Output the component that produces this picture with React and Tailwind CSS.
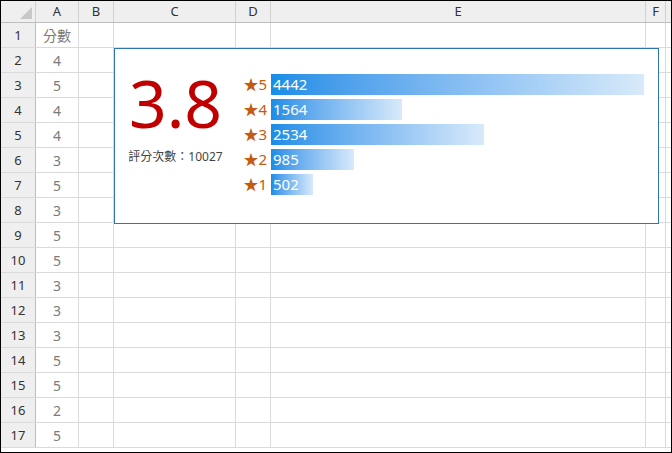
const cols = [
  { name: "A", w: 43 },
  { name: "B", w: 35 },
  { name: "C", w: 122 },
  { name: "D", w: 35 },
  { name: "E", w: 375 },
  { name: "F", w: 20 },
];
const scores = ["分數", 4, 5, 4, 4, 3, 5, 3, 5, 5, 3, 3, 3, 5, 5, 2, 5];
const bars = [
  { s: 5, n: 4442 },
  { s: 4, n: 1564 },
  { s: 3, n: 2534 },
  { s: 2, n: 985 },
  { s: 1, n: 502 },
];
const font = { fontFamily: '"Noto Sans","Noto Sans CJK TC",sans-serif' };

export default function App() {
  return (
    <div className="w-[672px] h-[453px] border border-black bg-white relative overflow-hidden text-[#444]" style={font}>
      <div className="flex h-[22px] bg-[#efefef] border-b border-[#bdbdbd]">
        <div className="w-[35px] shrink-0 border-r border-[#d0d0d0] relative">
          <div className="absolute right-[3px] bottom-[3px] w-0 h-0 border-l-[12px] border-l-transparent border-b-[12px] border-b-[#c8c8c8]" />
        </div>
        {cols.map((c) => (
          <div key={c.name} style={{ width: c.w }} className="shrink-0 border-r border-[#d0d0d0] flex items-center justify-center text-[13px] text-[#333]">
            {c.name}
          </div>
        ))}
        <div className="flex-1" />
      </div>
      {scores.map((v, i) => (
        <div key={i} className="flex h-[25px] border-b border-[#dadada]">
          <div className="w-[35px] shrink-0 bg-[#efefef] border-r border-[#bdbdbd] flex items-end justify-center pb-[2px] text-[13px] text-[#333]">
            {i + 1}
          </div>
          {cols.map((c, j) => (
            <div key={c.name} style={{ width: c.w }} className="shrink-0 border-r border-[#dadada] flex items-center justify-center text-[14px] text-[#7a7a7a]">
              {j === 0 ? v : ""}
            </div>
          ))}
          <div className="flex-1" />
        </div>
      ))}
      <div className="absolute left-[113px] top-[47px] w-[545px] h-[176px] bg-white border border-[#2e75b6] flex">
        <div className="w-[121px] flex flex-col items-center pt-[18px]">
          <div className="text-[66px] leading-[70px] text-[#c00000]">3.8</div>
          <div className="text-[12px] leading-[16px] text-[#444] mt-[12px]">評分次數：10027</div>
        </div>
        <div className="flex flex-col gap-[4px] pt-[25px] pl-[4px]">
          {bars.map((b) => (
            <div key={b.s} className="flex items-center h-[21px]">
              <div className="w-[31px] text-[15px] text-[#c55a11] text-right pr-[4px]">★{b.s}</div>
              <div
                className="h-[21px] bg-gradient-to-r from-[#168de6] to-[#d8eafa] text-white text-[15px] leading-[21px] pl-[2px] whitespace-nowrap"
                style={{ width: Math.round((b.n / 4442) * 373) }}
              >
                {b.n}
              </div>
            </div>
          ))}
        </div>
      </div>
    </div>
  );
}
